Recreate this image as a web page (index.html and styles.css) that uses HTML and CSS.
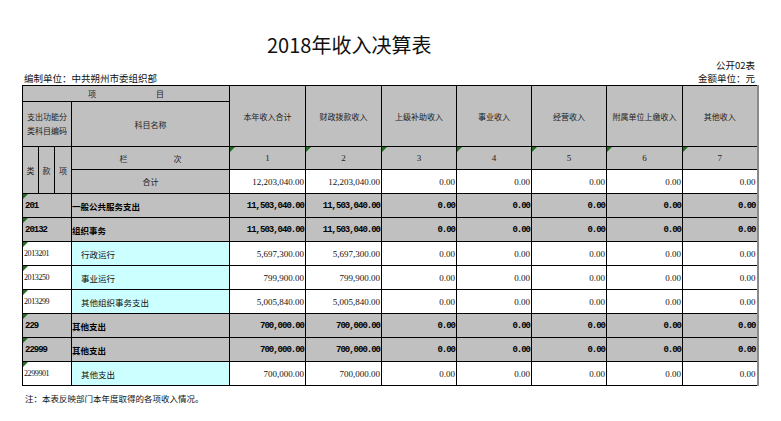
FILE: index.html
```html
<!DOCTYPE html>
<html lang="zh-CN">
<head>
<meta charset="utf-8">
<title>2018年收入决算表</title>
<link rel="stylesheet" href="styles.css">
</head>
<body>
<div class="page">
  <h1 class="title">2018年收入决算表</h1>
  <div class="form-no">公开02表</div>
  <div class="meta">
    <span>编制单位：中共朔州市委组织部</span>
    <span>金额单位：元</span>
  </div>
  <table class="report">
    <colgroup>
      <col class="c-code"><col class="c-code"><col class="c-code3">
      <col class="c-name">
      <col class="c-num6"><col class="c-num6"><col class="c-num5"><col class="c-num5"><col class="c-num5"><col class="c-num6"><col class="c-num5">
    </colgroup>
    <thead>
      <tr class="h1">
        <th colspan="4" class="spread">项<span class="gap"></span>目</th>
        <th rowspan="2">本年收入合计</th>
        <th rowspan="2">财政拨款收入</th>
        <th rowspan="2">上级补助收入</th>
        <th rowspan="2">事业收入</th>
        <th rowspan="2">经营收入</th>
        <th rowspan="2">附属单位上缴收入</th>
        <th rowspan="2" class="last">其他收入</th>
      </tr>
      <tr class="h2">
        <th colspan="3" class="wrap">支出功能分类科目编码</th>
        <th>科目名称</th>
      </tr>
      <tr class="h3">
        <th rowspan="2">类</th>
        <th rowspan="2">款</th>
        <th rowspan="2">项</th>
        <th>栏<span class="gap2"></span>次</th>
        <th class="tri">1</th>
        <th class="tri">2</th>
        <th class="tri">3</th>
        <th class="tri">4</th>
        <th class="tri">5</th>
        <th class="tri">6</th>
        <th class="tri last">7</th>
      </tr>
      <tr class="h4">
        <th>合计</th>
        <td class="num">12,203,040.00</td>
        <td class="num">12,203,040.00</td>
        <td class="num">0.00</td>
        <td class="num">0.00</td>
        <td class="num">0.00</td>
        <td class="num">0.00</td>
        <td class="num last">0.00</td>
      </tr>
    </thead>
    <tbody>
      <tr class="grp">
        <td colspan="3" class="code tri">201</td>
        <td class="name">一般公共服务支出</td>
        <td class="num">11,503,040.00</td><td class="num">11,503,040.00</td><td class="num">0.00</td><td class="num">0.00</td><td class="num">0.00</td><td class="num">0.00</td><td class="num last">0.00</td>
      </tr>
      <tr class="grp">
        <td colspan="3" class="code tri">20132</td>
        <td class="name">组织事务</td>
        <td class="num">11,503,040.00</td><td class="num">11,503,040.00</td><td class="num">0.00</td><td class="num">0.00</td><td class="num">0.00</td><td class="num">0.00</td><td class="num last">0.00</td>
      </tr>
      <tr class="item">
        <td colspan="3" class="code tri">2013201</td>
        <td class="name">行政运行</td>
        <td class="num">5,697,300.00</td><td class="num">5,697,300.00</td><td class="num">0.00</td><td class="num">0.00</td><td class="num">0.00</td><td class="num">0.00</td><td class="num last">0.00</td>
      </tr>
      <tr class="item">
        <td colspan="3" class="code tri">2013250</td>
        <td class="name">事业运行</td>
        <td class="num">799,900.00</td><td class="num">799,900.00</td><td class="num">0.00</td><td class="num">0.00</td><td class="num">0.00</td><td class="num">0.00</td><td class="num last">0.00</td>
      </tr>
      <tr class="item">
        <td colspan="3" class="code tri">2013299</td>
        <td class="name">其他组织事务支出</td>
        <td class="num">5,005,840.00</td><td class="num">5,005,840.00</td><td class="num">0.00</td><td class="num">0.00</td><td class="num">0.00</td><td class="num">0.00</td><td class="num last">0.00</td>
      </tr>
      <tr class="grp">
        <td colspan="3" class="code tri">229</td>
        <td class="name">其他支出</td>
        <td class="num">700,000.00</td><td class="num">700,000.00</td><td class="num">0.00</td><td class="num">0.00</td><td class="num">0.00</td><td class="num">0.00</td><td class="num last">0.00</td>
      </tr>
      <tr class="grp">
        <td colspan="3" class="code tri">22999</td>
        <td class="name">其他支出</td>
        <td class="num">700,000.00</td><td class="num">700,000.00</td><td class="num">0.00</td><td class="num">0.00</td><td class="num">0.00</td><td class="num">0.00</td><td class="num last">0.00</td>
      </tr>
      <tr class="item">
        <td colspan="3" class="code tri">2299901</td>
        <td class="name">其他支出</td>
        <td class="num">700,000.00</td><td class="num">700,000.00</td><td class="num">0.00</td><td class="num">0.00</td><td class="num">0.00</td><td class="num">0.00</td><td class="num last">0.00</td>
      </tr>
    </tbody>
  </table>
  <p class="note">注：本表反映部门本年度取得的各项收入情况。</p>
</div>
</body>
</html>
```

FILE: styles.css
```css
* { box-sizing: border-box; }

body {
  margin: 0;
  background: #fff;
  color: #111;
  font-family: "Noto Sans CJK SC", sans-serif;
}

.page {
  width: 781px;
  padding-left: 22px;
}

.title {
  margin: 33px 0 0 245px;
  font-family: "Liberation Sans Narrow", "Noto Sans CJK SC", sans-serif;
  font-size: 20px;
  line-height: 24px;
  font-weight: 400;
  color: #111;
}

.form-no {
  width: 735px;
  margin-top: 1px;
  padding-right: 2px;
  text-align: right;
  font-size: 9.5px;
  line-height: 14px;
}

.meta {
  width: 735px;
  display: flex;
  justify-content: space-between;
  padding: 0 2px;
  font-size: 9.5px;
  line-height: 13px;
}

.report {
  border-collapse: collapse;
  table-layout: fixed;
  width: 735px;
}

.c-code { width: 16px; }
.c-code3 { width: 17px; }
.c-name { width: 158px; }
.c-num6 { width: 76px; }
.c-num5 { width: 75px; }

.report th,
.report td {
  border: 1px solid #000;
  padding: 0;
  overflow: hidden;
  white-space: nowrap;
}

.report th {
  background: #c0c0c0;
  font-weight: 400;
  font-size: 8px;
  color: #222;
  text-align: center;
  vertical-align: middle;
}

.report .last { border-right: 2px solid #8a8a8a; }

.h1 { height: 16px; }
.h2 { height: 45px; }
.h3 { height: 23px; }
.h4 { height: 22px; }

.report th.wrap {
  white-space: normal;
  line-height: 14px;
  padding: 0 2px;
}

.gap { display: inline-block; width: 60px; }
.gap2 { display: inline-block; width: 46px; }

.h3 th { font-family: "Liberation Serif", "Noto Sans CJK SC", serif; font-size: 9px; }
.h3 th:nth-child(-n+4) { font-family: "Noto Sans CJK SC", sans-serif; font-size: 8px; }

.tri { position: relative; }
.tri::before {
  content: "";
  position: absolute;
  left: 0;
  top: 0;
  width: 0;
  height: 0;
  border-style: solid;
  border-width: 5px 5px 0 0;
  border-color: #1f6e1f transparent transparent transparent;
}

.report td { height: 24px; background: #fff; }

.num {
  text-align: right;
  padding-right: 1px !important;
  font-family: "Liberation Serif", serif;
  font-size: 9px;
  color: #111;
}

.grp td { background: #c0c0c0; }
.grp .num,
.grp .code {
  font-family: "Liberation Mono", monospace;
  font-weight: 700;
  font-size: 9px;
  letter-spacing: -1px;
  color: #000;
}
.grp .code { padding-left: 2px; }
.grp .name {
  font-weight: 700;
  font-size: 8.5px;
  color: #000;
}

.item .code {
  font-family: "Liberation Serif", serif;
  font-size: 8px;
  letter-spacing: -0.4px;
  padding-left: 1px;
}
.item .name {
  background: #ccffff;
  font-size: 8.5px;
  padding-left: 9px;
}

.note {
  margin: 6px 0 0 3px;
  font-size: 8.5px;
  line-height: 13px;
}
```
